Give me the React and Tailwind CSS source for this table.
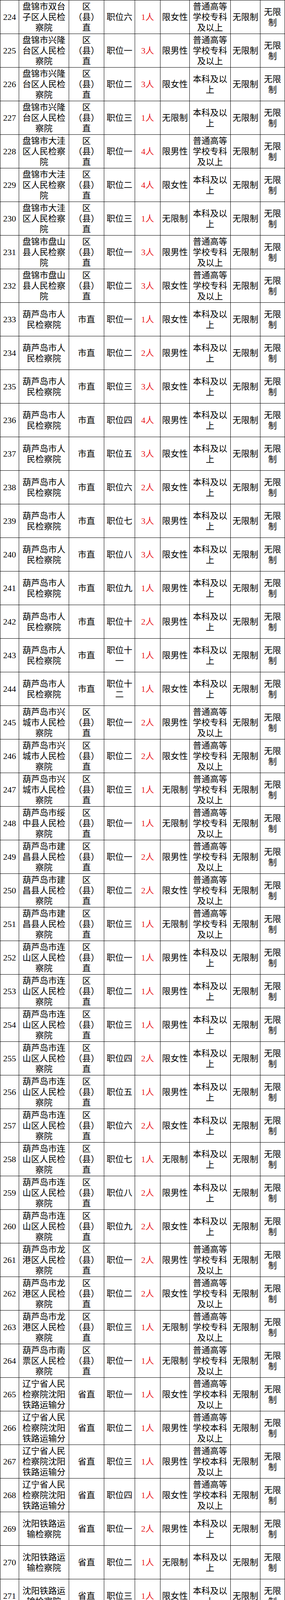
import React from 'react';

const ZX = '区（县）直';
const PT = '普通高等学校专科及以上';
const PB = '普通高等学校本科及以上';
const BK = '本科及以上';

const PJ_XLT = '盘锦市兴隆台区人民检察院';
const PJ_DW = '盘锦市大洼区人民检察院';
const PJ_PS = '盘锦市盘山县人民检察院';
const HLD = '葫芦岛市人民检察院';
const HLD_XC = '葫芦岛市兴城市人民检察院';
const HLD_JC = '葫芦岛市建昌县人民检察院';
const HLD_LS = '葫芦岛市连山区人民检察院';
const HLD_LG = '葫芦岛市龙港区人民检察院';
const SY_FY = '辽宁省人民检察院沈阳铁路运输分院';
const SY = '沈阳铁路运输检察院';
const DL = '大连铁路运输检察院';
const JZ = '锦州铁路运输检察院';
const DD = '丹东铁路运输检察院';
const LH_FY = '辽宁省人民检察院辽河分院';
const LH = '辽宁省辽河人民检察院';

// [no, unit, level, post, count, gender, education]
const rows = [
  [224, '盘锦市双台子区人民检察院', ZX, '职位六', 1, '限女性', PT],
  [225, PJ_XLT, ZX, '职位一', 3, '限男性', PT],
  [226, PJ_XLT, ZX, '职位二', 3, '限女性', BK],
  [227, PJ_XLT, ZX, '职位三', 1, '无限制', BK],
  [228, PJ_DW, ZX, '职位一', 4, '限男性', PT],
  [229, PJ_DW, ZX, '职位二', 4, '限女性', BK],
  [230, PJ_DW, ZX, '职位三', 1, '无限制', BK],
  [231, PJ_PS, ZX, '职位一', 3, '限男性', PT],
  [232, PJ_PS, ZX, '职位二', 3, '限女性', PT],
  [233, HLD, '市直', '职位一', 1, '限女性', BK],
  [234, HLD, '市直', '职位二', 2, '限男性', BK],
  [235, HLD, '市直', '职位三', 3, '限女性', BK],
  [236, HLD, '市直', '职位四', 4, '限男性', BK],
  [237, HLD, '市直', '职位五', 3, '限女性', BK],
  [238, HLD, '市直', '职位六', 2, '限女性', BK],
  [239, HLD, '市直', '职位七', 3, '限男性', BK],
  [240, HLD, '市直', '职位八', 3, '限女性', BK],
  [241, HLD, '市直', '职位九', 1, '限男性', BK],
  [242, HLD, '市直', '职位十', 2, '限男性', BK],
  [243, HLD, '市直', '职位十一', 1, '限男性', BK],
  [244, HLD, '市直', '职位十二', 1, '限女性', BK],
  [245, HLD_XC, ZX, '职位一', 2, '限男性', PT],
  [246, HLD_XC, ZX, '职位二', 2, '限女性', PT],
  [247, HLD_XC, ZX, '职位三', 1, '无限制', PT],
  [248, '葫芦岛市绥中县人民检察院', ZX, '职位一', 1, '无限制', PT],
  [249, HLD_JC, ZX, '职位一', 2, '限男性', PT],
  [250, HLD_JC, ZX, '职位二', 2, '限女性', PT],
  [251, HLD_JC, ZX, '职位三', 1, '无限制', PT],
  [252, HLD_LS, ZX, '职位一', 1, '限男性', BK],
  [253, HLD_LS, ZX, '职位二', 1, '限男性', BK],
  [254, HLD_LS, ZX, '职位三', 1, '限男性', BK],
  [255, HLD_LS, ZX, '职位四', 2, '限女性', BK],
  [256, HLD_LS, ZX, '职位五', 1, '限男性', BK],
  [257, HLD_LS, ZX, '职位六', 2, '限女性', BK],
  [258, HLD_LS, ZX, '职位七', 1, '无限制', BK],
  [259, HLD_LS, ZX, '职位八', 2, '限男性', BK],
  [260, HLD_LS, ZX, '职位九', 2, '限女性', BK],
  [261, HLD_LG, ZX, '职位一', 2, '限男性', PT],
  [262, HLD_LG, ZX, '职位二', 2, '限女性', PT],
  [263, HLD_LG, ZX, '职位三', 1, '无限制', PT],
  [264, '葫芦岛市南票区人民检察院', ZX, '职位一', 1, '无限制', PT],
  [265, SY_FY, '省直', '职位一', 1, '限女性', PB],
  [266, SY_FY, '省直', '职位二', 1, '限男性', PB],
  [267, SY_FY, '省直', '职位三', 1, '限男性', PB],
  [268, SY_FY, '省直', '职位四', 1, '限女性', PB],
  [269, SY, '省直', '职位一', 2, '限男性', BK],
  [270, SY, '省直', '职位二', 1, '无限制', BK],
  [271, SY, '省直', '职位三', 1, '限女性', BK],
  [272, SY, '省直', '职位四', 1, '限女性', PT],
  [273, DL, '省直', '职位一', 1, '限男性', BK],
  [274, DL, '省直', '职位二', 1, '限女性', BK],
  [275, JZ, '省直', '职位一', 1, '限男性', BK],
  [276, JZ, '省直', '职位二', 1, '限女性', PT],
  [277, DD, '省直', '职位一', 1, '限女性', PT],
  [278, DD, '省直', '职位二', 1, '限男性', PT],
  [279, LH_FY, '省直', '职位一', 3, '限男性', PB],
  [280, LH_FY, '省直', '职位二', 3, '限女性', PB],
  [281, LH_FY, '省直', '职位三', 1, '无限制', PB],
  [282, LH, '省直', '职位一', 2, '限男性', PT],
  [283, LH, '省直', '职位二', 2, '限女性', PT],
  [284, LH, '省直', '职位三', 1, '无限制', PT],
];

// fixed-height cell, text centred; at most 3 lines show (long names get cut like in the sheet)
const Cell = ({ className = '', children }) => (
  <div className={`flex flex-col min-h-0 h-[86px] overflow-hidden border-r border-b border-black ${className}`}>
    <div className="my-auto w-full max-h-[81px] overflow-hidden text-center break-all">{children}</div>
  </div>
);

const App = () => {
  return (
    <div className="w-[730px] bg-white border-l border-t border-black text-black text-[22px] leading-[27px] font-['Liberation_Serif','Noto_Sans_CJK_SC',serif]">
      {rows.map(([no, unit, level, post, count, gender, edu]) => (
        <div
          key={no}
          className="grid grid-cols-[48px_128px_90px_79px_65px_75px_105px_76px_63px] grid-rows-[86px] h-[86px] overflow-hidden"
        >
          <Cell>{no}</Cell>
          <Cell className="px-2">{unit}</Cell>
          <Cell className="px-2">{level}</Cell>
          <Cell className="px-1">{post}</Cell>
          <Cell className="px-1 text-[#e8141b]">{count}人</Cell>
          <Cell className="px-1">{gender}</Cell>
          <Cell className="px-[7px]">{edu}</Cell>
          <Cell className="px-1">无限制</Cell>
          <Cell className="px-1">无限制</Cell>
        </div>
      ))}
    </div>
  );
};

export default App;
